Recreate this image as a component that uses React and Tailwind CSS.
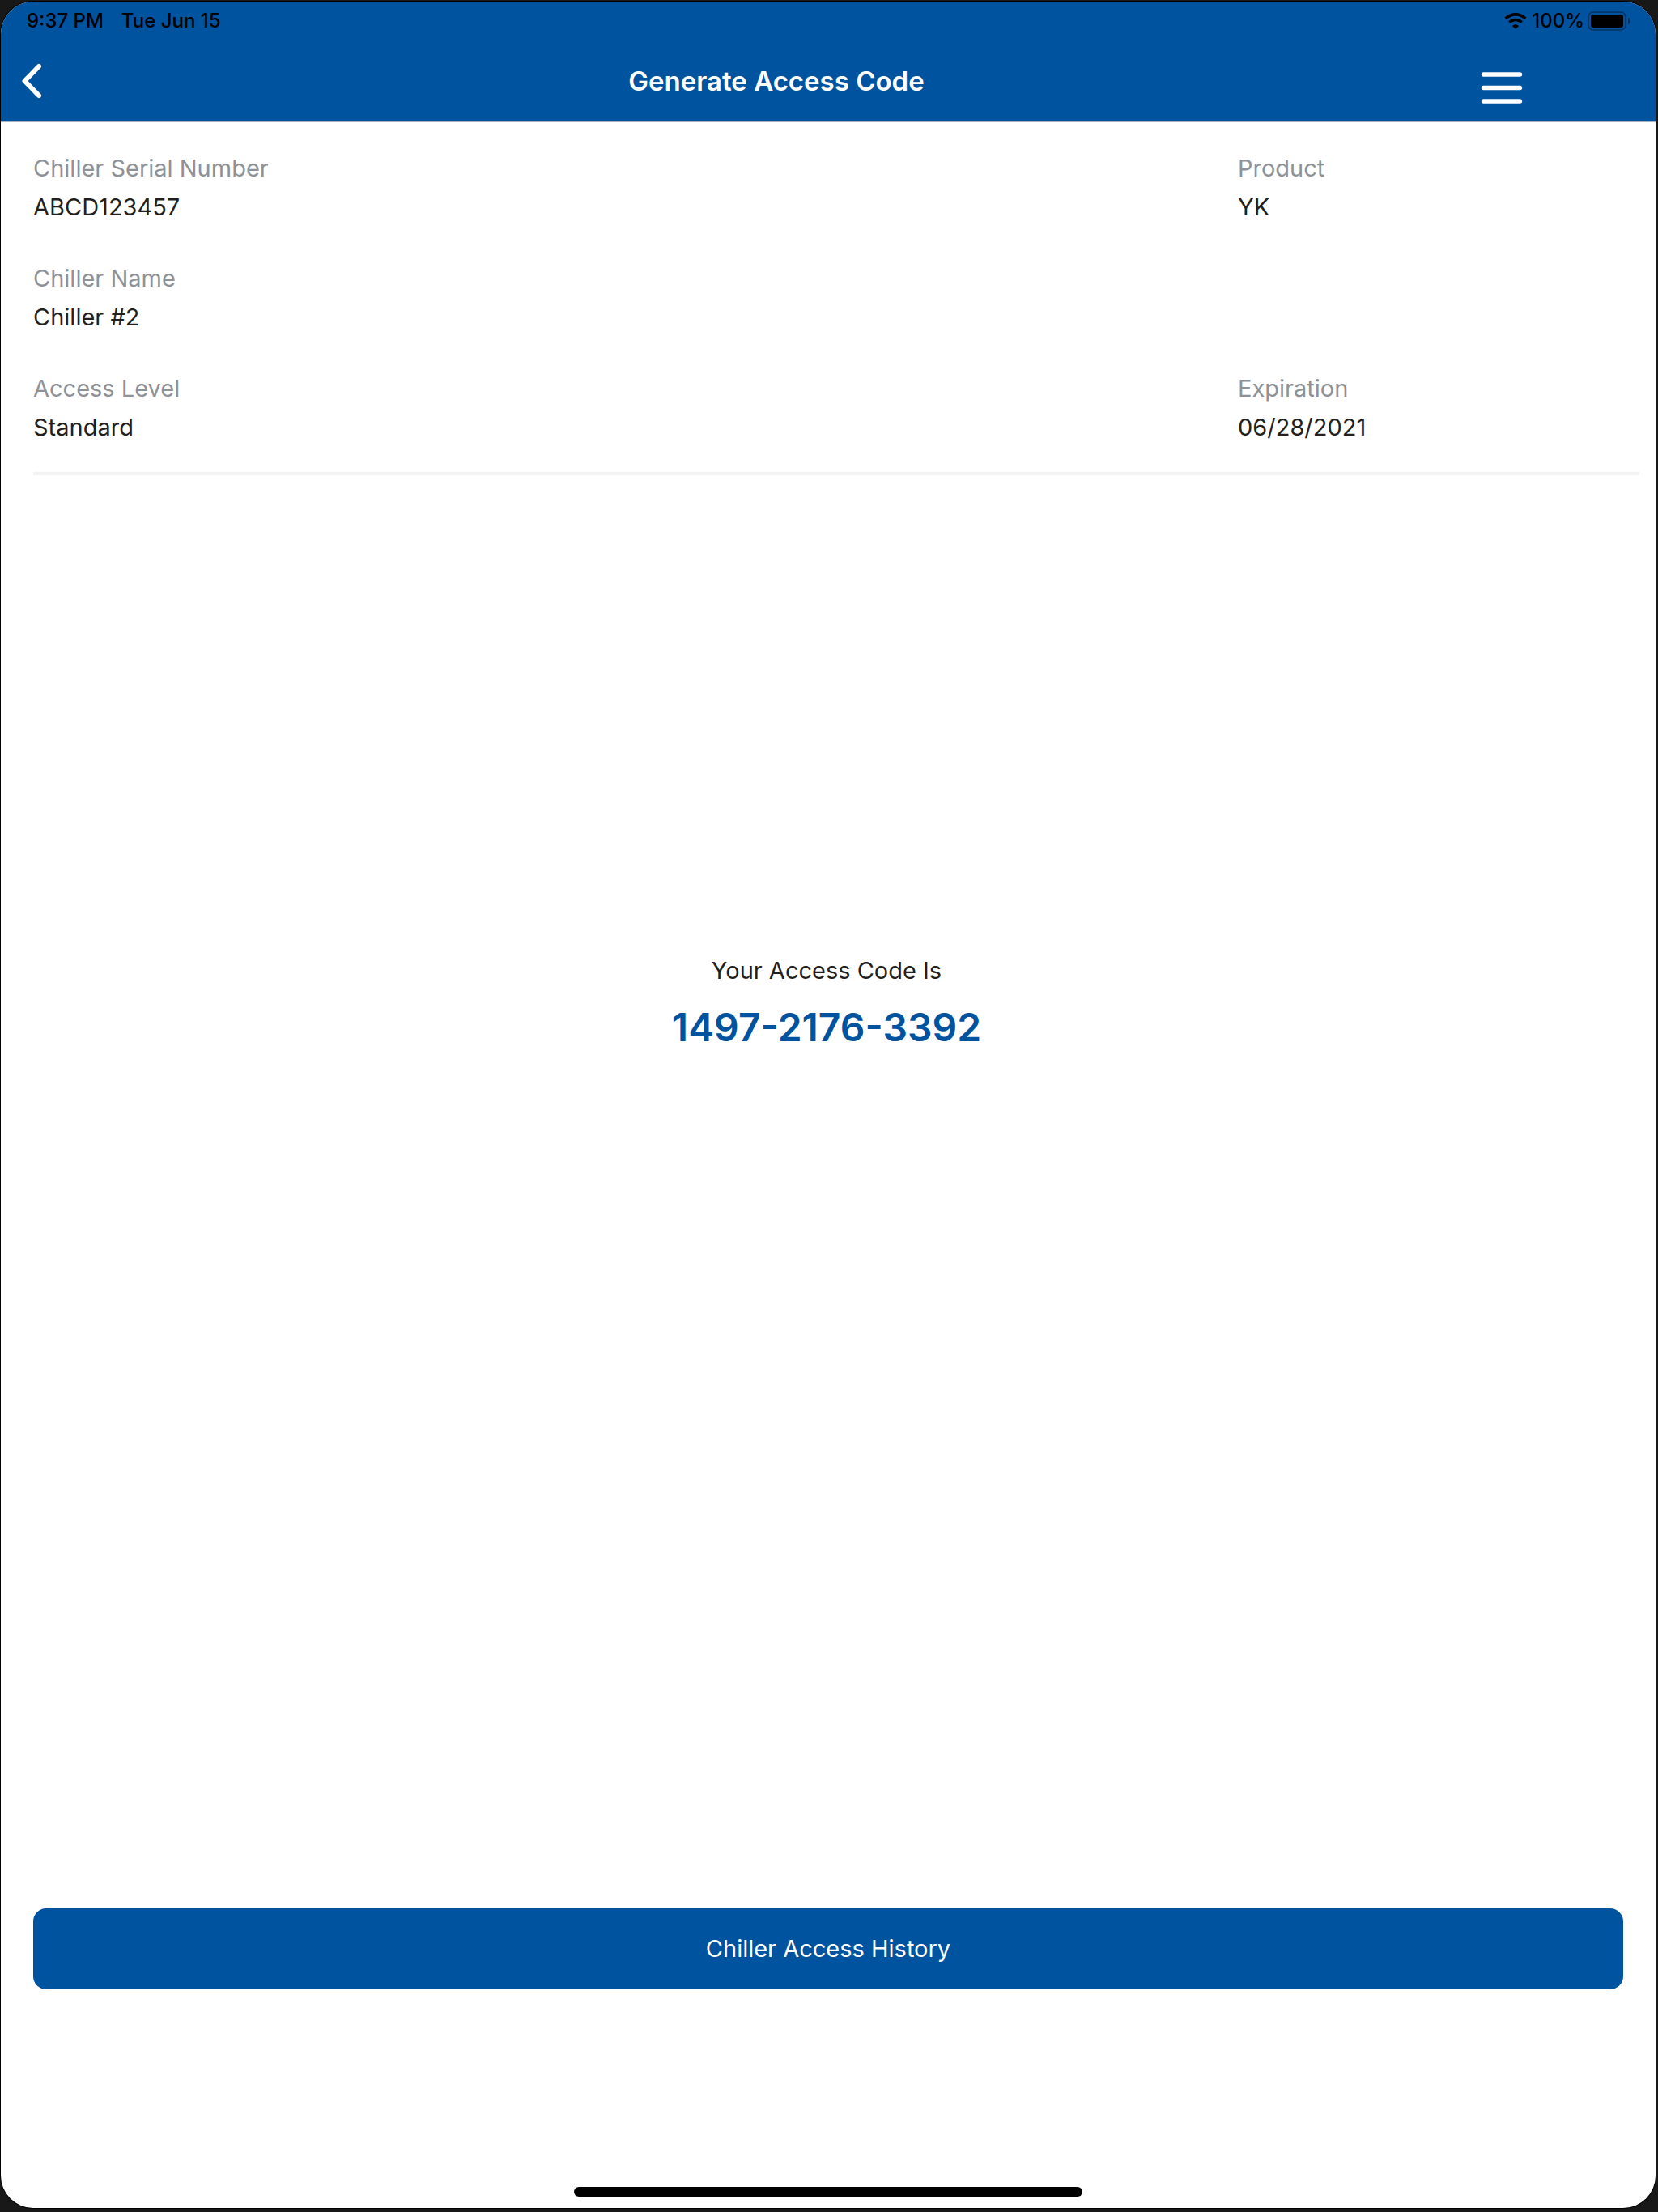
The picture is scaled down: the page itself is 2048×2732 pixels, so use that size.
import React from "react";

const details = [
  { label: "Chiller Serial Number", value: "ABCD123457", wide: true },
  { label: "Product", value: "YK" },
  { label: "Chiller Name", value: "Chiller #2", full: true },
  { label: "Access Level", value: "Standard", wide: true },
  { label: "Expiration", value: "06/28/2021" },
];

const WifiIcon = () => (
  <svg width="28" height="20" viewBox="0 0 28 20" fill="none" aria-hidden="true">
    <path d="M1.8 6.9a17.3 17.3 0 0 1 24.4 0" stroke="black" strokeWidth="3.6" />
    <path d="M6.3 11.6a11 11 0 0 1 15.4 0" stroke="black" strokeWidth="3.4" />
    <path d="M14 20l-4.1-4.1a5.9 5.9 0 0 1 8.2 0z" fill="black" />
  </svg>
);

const BatteryIcon = () => (
  <svg width="54" height="24" viewBox="0 0 54 24" fill="none" aria-hidden="true">
    <rect x="1" y="1" width="46" height="22" rx="6" stroke="black" strokeOpacity="0.4" strokeWidth="1.6" />
    <rect x="4" y="4" width="40" height="16" rx="3" fill="black" />
    <path d="M50 8c2 .6 3 2.200 3 4s-1 3.400-3 4z" fill="black" fillOpacity="0.45" />
  </svg>
);

const App = () => {
  return (
    <div className="min-h-screen flex flex-col bg-[#181818] pt-0.5 pr-[3px] pb-[5px] pl-px font-['Inter',sans-serif]">
      <div className="flex-1 flex flex-col bg-white rounded-[40px] overflow-hidden ring-1 ring-black">
        <header className="bg-[#00539f] border-b border-[#a9b4c4]">
          {/* Status bar */}
          <div className="h-12 pl-8 pr-[30px] flex items-center justify-between text-2xl font-medium text-black">
            <div className="flex gap-[22px]">
              <span>9:37 PM</span>
              <span>Tue Jun 15</span>
            </div>
            <div className="flex items-center gap-1.5">
              <WifiIcon />
              <div className="flex items-center gap-1">
                <span>100%</span>
                <BatteryIcon />
              </div>
            </div>
          </div>

          {/* Navigation */}
          <nav className="h-[100px] pr-[164px] flex items-center">
            <button type="button" aria-label="Back" className="w-[88px] pl-6">
              <svg width="30" height="48" viewBox="0 0 30 48" fill="none" aria-hidden="true">
                <path d="M23 6L5.500 24L23 42" stroke="white" strokeWidth="6" strokeLinecap="round" strokeLinejoin="round" />
              </svg>
            </button>
            <h1 className="flex-1 pt-0.5 text-center text-[33px] font-semibold text-white">
              Generate Access Code
            </h1>
            <button type="button" aria-label="Menu" className="pt-4">
              <svg width="52" height="40" viewBox="0 0 52 40" fill="none" aria-hidden="true">
                <path d="M3.500 4H48.500M3.500 20.500H48.500M3.500 37H48.500" stroke="white" strokeWidth="5.400" strokeLinecap="round" />
              </svg>
            </button>
          </nav>
        </header>

        <main className="flex-1 flex flex-col pt-[33px]">
          {/* Chiller details */}
          <section className="ml-10 mr-5 pb-[31px] border-b-4 border-[#f3f3f3]">
            <dl className="grid grid-cols-4 gap-y-10 text-[29px] leading-[48px]">
              {details.map((item) => (
                <div
                  key={item.label}
                  className={item.full ? "col-span-4" : item.wide ? "col-span-3" : ""}
                >
                  <dt className="text-[#8e9297]">{item.label}</dt>
                  <dd className="text-[#231f1c]">{item.value}</dd>
                </div>
              ))}
            </dl>
          </section>

          {/* Access code */}
          <section className="flex-1 pt-[588px] pr-1 text-center">
            <p className="text-[29px] leading-[48px] text-[#231f1c]">Your Access Code Is</p>
            <p className="mt-3.5 text-5xl leading-[64px] font-semibold text-[#00539f]">
              1497-2176-3392
            </p>
          </section>

          <button
            type="button"
            className="mx-10 h-[100px] rounded-2xl bg-[#00539f] text-[29px] text-white"
          >
            Chiller Access History
          </button>
        </main>

        {/* Home indicator */}
        <footer className="pt-[244px] pb-3.5">
          <div className="mx-auto w-[628px] h-3 rounded-full bg-black"></div>
        </footer>
      </div>
    </div>
  );
};

export default App;
